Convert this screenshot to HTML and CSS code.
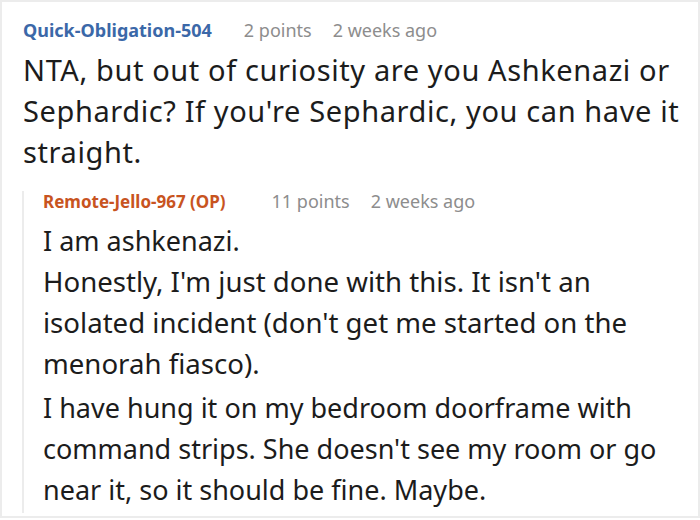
FILE: index.html
```html
<!DOCTYPE html>
<html lang="en">
<head>
    <meta charset="UTF-8">
    <title>Comments</title>
    <link rel="stylesheet" href="styles.css">
</head>
<body>

<div class="thread">
    <div class="comment">
        <div class="meta">
            <span class="author">Quick-Obligation-504</span>
            <span class="info">2 points</span>
            <span class="info">2 weeks ago</span>
        </div>
        <div class="text wide">
            NTA, but out of curiosity are you Ashkenazi or Sephardic? If you're Sephardic, you can have it straight.
        </div>
    </div>

    <div class="comment reply">
        <div class="meta">
            <span class="author op">Remote-Jello-967 (OP)</span>
            <span class="info">11 points</span>
            <span class="info">2 weeks ago</span>
        </div>
        <div class="text">
            <p>I am ashkenazi.</p>
            <p class="mid">Honestly, I'm just done with this. It isn't an isolated incident (don't get me started on the menorah fiasco).</p>
            <p class="last">I have hung it on my bedroom doorframe with command strips. She doesn't see my room or go near it, so it should be fine. Maybe.</p>
        </div>
    </div>
</div>

</body>
</html>
```

FILE: styles.css
```css
body {
    margin: 0;
    font-family: "Noto Sans", "Open Sans", sans-serif;
    background: #fff;
    color: #1c1c1c;
}
.thread {
    height: 518px;
    box-sizing: border-box;
    border: 2px solid #ececec;
    padding: 18px 10px 0 21px;
}
.meta {
    display: flex;
    gap: 21px;
    align-items: baseline;
    height: 20px;
    line-height: 20px;
    margin-bottom: 9px;
}
.author {
    font-weight: 700;
    font-size: 18px;
    color: #3b68a8;
    margin-right: 11px;
}
.author.op {
    font-size: 17px;
    color: #c8541f;
    margin-right: 25px;
}
.info {
    font-size: 18px;
    color: #8d8d8d;
}
.text {
    font-size: 27px;
    line-height: 41px;
}
.text.wide {
    font-size: 29px;
    letter-spacing: 0.6px;
}
.text p {
    margin: 0;
}
.text p.mid {
    font-size: 27.6px;
}
.text p.last {
    margin-top: 3px;
}
.reply {
    margin: 19px 0 0 -1px;
    border-left: 2px solid #ececec;
    padding-left: 19px;
    padding-bottom: 3px;
}
.reply .text {
    max-width: 620px;
}
```
